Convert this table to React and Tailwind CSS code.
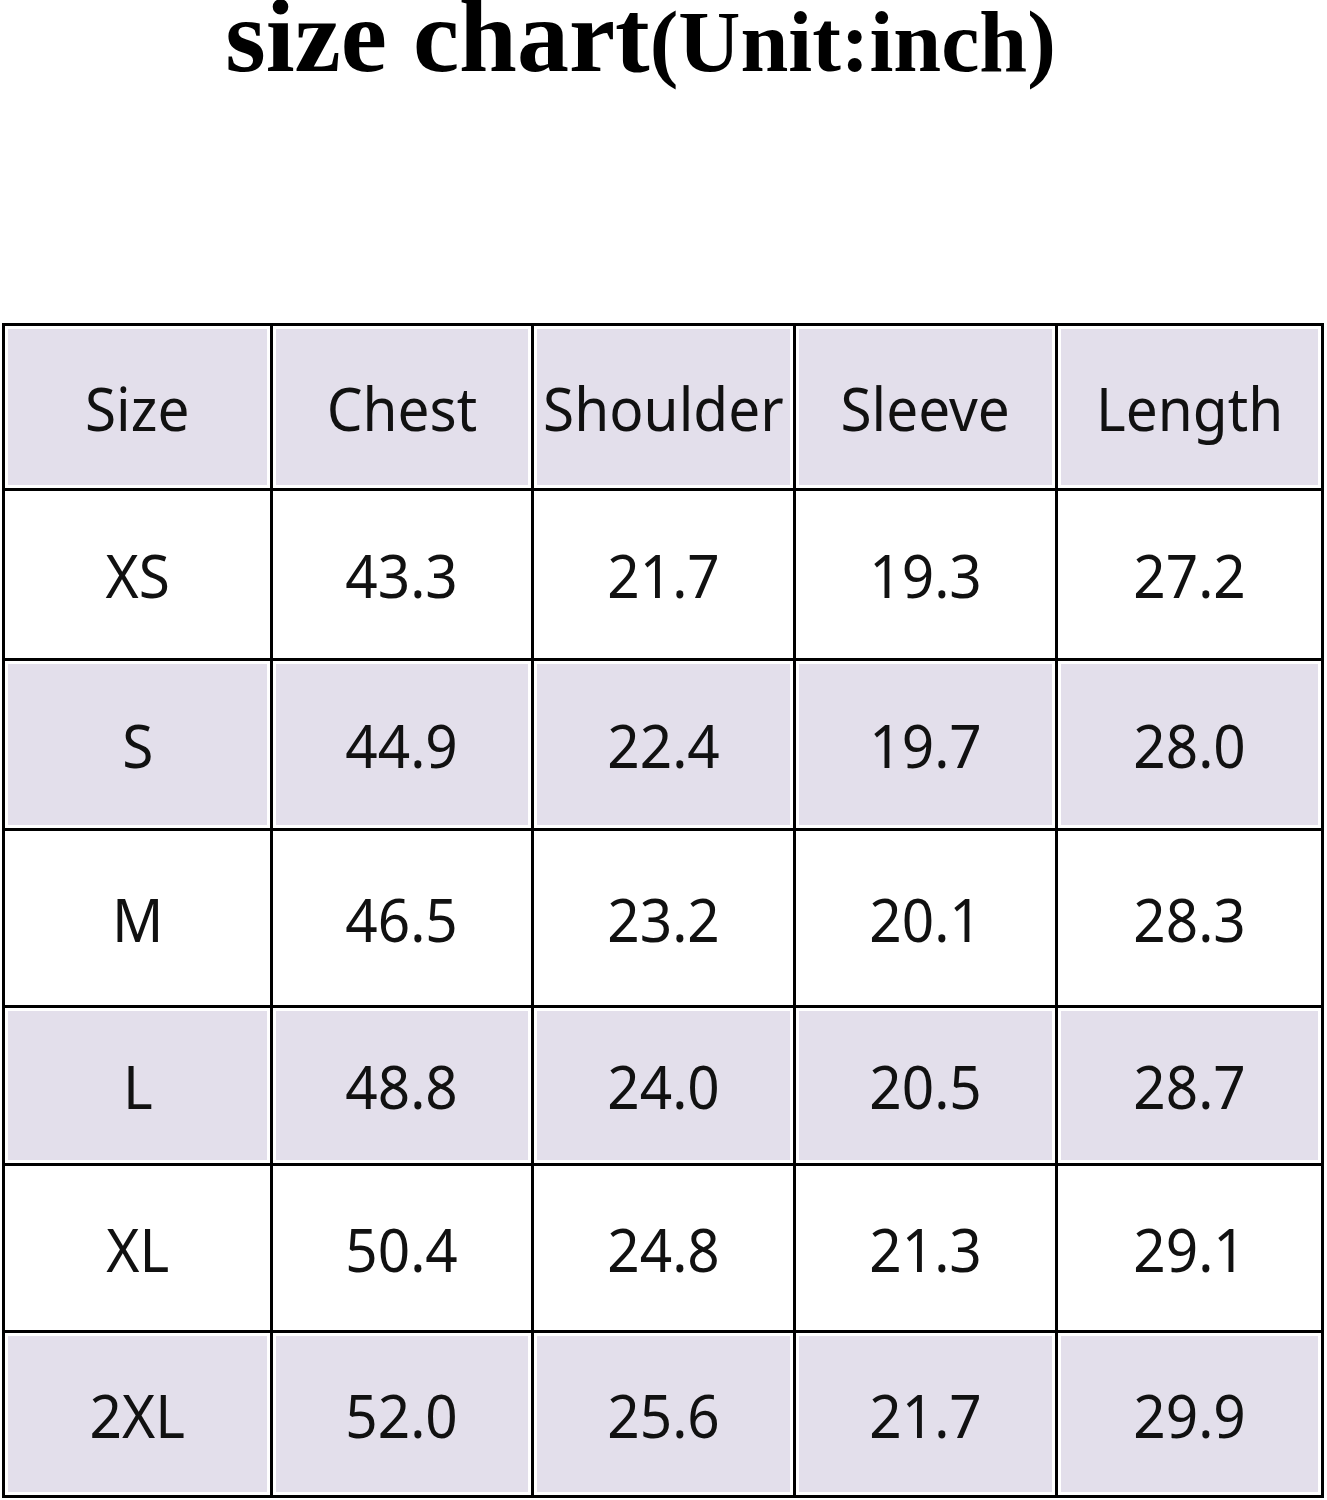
import React from "react";

const header = ["Size", "Chest", "Shoulder", "Sleeve", "Length"];
const rows = [
  ["XS", "43.3", "21.7", "19.3", "27.2"],
  ["S", "44.9", "22.4", "19.7", "28.0"],
  ["M", "46.5", "23.2", "20.1", "28.3"],
  ["L", "48.8", "24.0", "20.5", "28.7"],
  ["XL", "50.4", "24.8", "21.3", "29.1"],
  ["2XL", "52.0", "25.6", "21.7", "29.9"],
];

function Cell({ text, shaded }) {
  return (
    <div className="bg-white p-[3px]">
      <div
        className={
          "w-full h-full flex items-center justify-center " +
          (shaded ? "bg-[#e3dfeb]" : "bg-white")
        }
      >
        <span className="inline-block scale-x-[0.93] text-[61px] leading-none text-[#111] whitespace-nowrap">
          {text}
        </span>
      </div>
    </div>
  );
}

export default function App() {
  const all = [header, ...rows];
  return (
    <div
      className="w-[1327px] h-[1500px] bg-white relative overflow-hidden"
      style={{ fontFamily: '"Noto Sans", "Open Sans", sans-serif' }}
    >
      <div
        className="flex justify-center items-baseline pr-[46px] h-[96px] font-bold text-black"
        style={{ fontFamily: '"Liberation Serif", "Times New Roman", serif' }}
      >
        <span className="text-[104px] leading-[72px]">size chart</span>
        <span className="text-[86px] leading-[72px]">(Unit:inch)</span>
      </div>
      <div className="h-[227px]" />
      <div className="ml-[2px] w-[1322px] bg-black p-[3px] grid gap-[3px] grid-cols-[265px_258px_259px_259px_263px] grid-rows-[162px_167px_167px_174px_155px_164px_162px]">
        {all.map((r, ri) =>
          r.map((t, ci) => (
            <Cell key={ri + "-" + ci} text={t} shaded={ri % 2 === 0} />
          ))
        )}
      </div>
    </div>
  );
}
